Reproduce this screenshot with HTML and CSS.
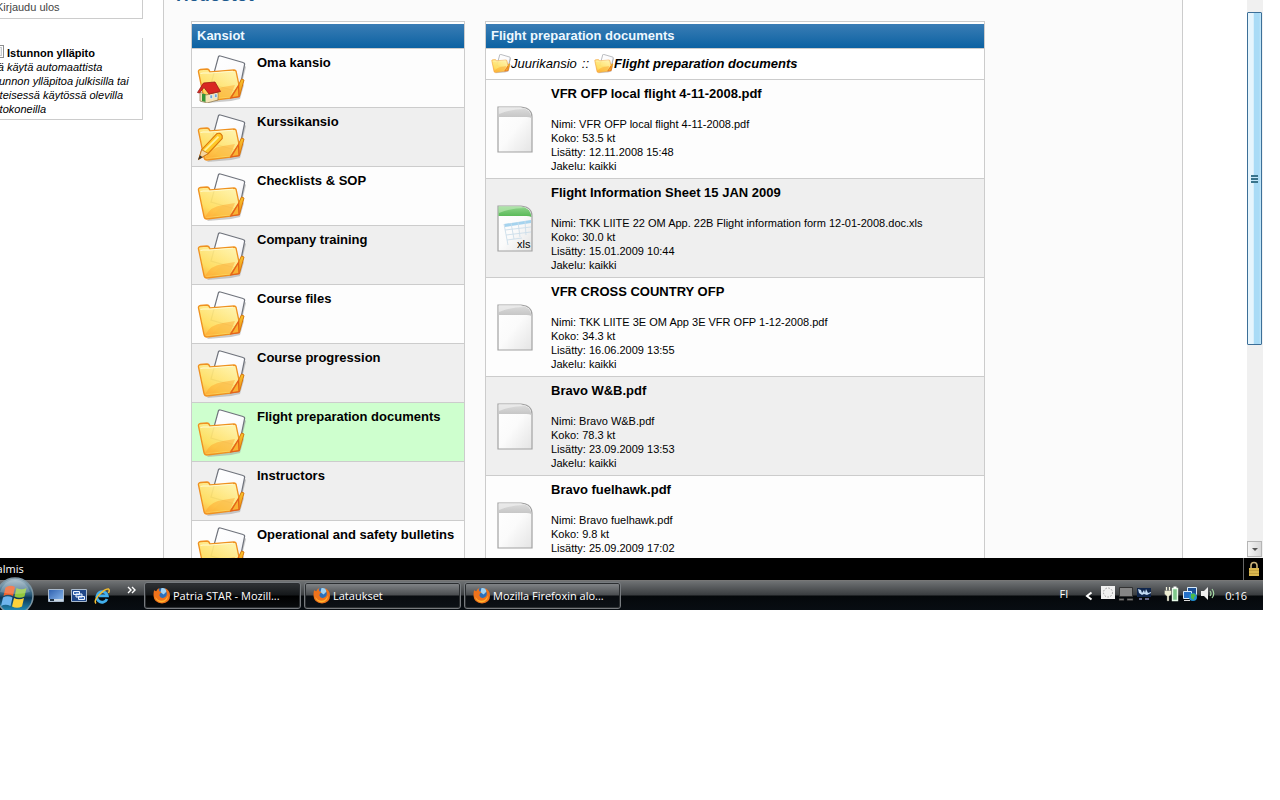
FILE: index.html
```html
<!DOCTYPE html>
<html lang="fi">
<head>
<meta charset="utf-8">
<title>Patria STAR</title>
<link rel="stylesheet" href="styles.css">
</head>
<body>
<svg class="defs" aria-hidden="true">
  <defs>
    <linearGradient id="gFront" x1="0" y1="1" x2="0.7" y2="0"><stop offset="0" stop-color="#ffa52a"/><stop offset=".35" stop-color="#ffdc58"/><stop offset="1" stop-color="#fff2a4"/></linearGradient>
    <linearGradient id="gBack" x1="0" y1="0" x2="0" y2="1"><stop offset="0" stop-color="#f7c52c"/><stop offset="1" stop-color="#f08a18"/></linearGradient>
    <linearGradient id="gPaper" x1="0" y1="0" x2="1" y2="1"><stop offset="0" stop-color="#fff"/><stop offset=".6" stop-color="#fbfbfd"/><stop offset="1" stop-color="#dfe2ea"/></linearGradient>
    <linearGradient id="gDoc" x1="0" y1="0" x2="1" y2="1"><stop offset="0" stop-color="#fff"/><stop offset=".5" stop-color="#fbfbfb"/><stop offset="1" stop-color="#e4e4e4"/></linearGradient>
    <linearGradient id="gGrey" x1="0" y1="0" x2="0" y2="1"><stop offset="0" stop-color="#dcdcdc"/><stop offset="1" stop-color="#c4c4c4"/></linearGradient>
    <linearGradient id="gGreen" x1="0" y1="0" x2="0" y2="1"><stop offset="0" stop-color="#8fd48c"/><stop offset="1" stop-color="#56b854"/></linearGradient>
    <linearGradient id="gOrb" x1="0" y1="0" x2="0" y2="1"><stop offset="0" stop-color="#a9bfcb"/><stop offset=".45" stop-color="#2f5f7e"/><stop offset=".55" stop-color="#0c3553"/><stop offset="1" stop-color="#27a0cf"/></linearGradient>
    <linearGradient id="gScreen" x1="0" y1="0" x2="1" y2="1"><stop offset="0" stop-color="#2d5fae"/><stop offset="1" stop-color="#8fbdf0"/></linearGradient>
    <symbol id="folder" viewBox="0 0 49 50">
      <path d="M47 10l2 2-4 16 2 2-4 14-9 2-24 2" fill="#999" opacity=".5"/>
      <path d="M21.500 1.500q1-1 2-.5L46 7.500q2 .5 1.500 2.500L42 37l-28-8z" fill="url(#gPaper)" stroke="#6f737c" stroke-width="1.200"/>
      <path d="M44.500 24l2.500 1-4.500 16.500L33 43l8-12z" fill="url(#gBack)" stroke="#d9780c"/>
      <path d="M1.500 17q-.5-2 2-2.500L10 14q2 0 3 3l24-2q2 0 2.200 2L42 30l-9 13.200L10 46q-2.500 0-3-2.500z" fill="url(#gFront)" fill-opacity=".93" stroke="#ef9120" stroke-width="1.300"/>
      <path d="M3.500 18.500l2.500-.5h7l23-1.800" stroke="#fffbd0" fill="none"/>
      <path d="M8 44q6-11 18-12l12-2-5 12z" fill="#ff9a20" opacity=".4"/>
      <path d="M41.500 30.500L34 42.800l8-1.200z" fill="#f9b233" stroke="#e4631a" stroke-width="1.300"/>
    </symbol>
    <symbol id="house" viewBox="0 0 24 22">
      <path d="M3 11l6 3 12-3v8l-11 3-7-2z" fill="#f5e3b4" stroke="#87734a" stroke-width=".7"/>
      <path d="M6.500 2L18 1l5.500 9.500L12 13 7 6.500 2.500 12l-2-.5z" fill="#d92722" stroke="#9b1b14" stroke-width=".8"/>
      <path d="M5 13h3.500v8L5 20z" fill="#369537"/>
      <path d="M13 14h2.500v3.500H13zM17.500 13H20v3.500h-2.500z" fill="#6ea8d4" stroke="#fff" stroke-width=".5"/>
    </symbol>
    <symbol id="pencil" viewBox="0 0 30 32">
      <path d="M2 30l3-10L21 3q4-2 6 2v3L12 24z" fill="#ffc928" stroke="#d9760b" stroke-width="1.200"/>
      <path d="M8 21L23 6" stroke="#fff19b" stroke-width="2"/>
      <path d="M5 20l7 4-10 6z" fill="#f5d7a0" stroke="#c57318" stroke-width=".8"/>
      <path d="M3 26l3 2-5 3z" fill="#333"/>
    </symbol>
    <symbol id="doc" viewBox="0 0 36 47">
      <path d="M1 1h23q11 1 11 10v35H1z" fill="url(#gDoc)" stroke="#a2a2a2" stroke-width="1.200"/>
      <path d="M1.500 1.500h22q10 1 11 10.500-2-1-5-1h-28z" fill="url(#gGrey)"/>
      <path d="M2 8Q14 3 28 3l-5-1.500H2z" fill="#f4f4f4" opacity=".6"/>
    </symbol>
    <symbol id="xls" viewBox="0 0 36 47">
      <path d="M1 1h23q11 1 11 10v35H1z" fill="url(#gDoc)" stroke="#a2a2a2" stroke-width="1.200"/>
      <path d="M1.500 1.500h22q10 1 11 10.500-2-1-5-1h-28z" fill="url(#gGreen)"/>
      <path d="M2 8Q14 3 28 3l-5-1.500H2z" fill="#c3ecbd" opacity=".6"/>
      <path d="M7 19l27-4v3L8 22z" fill="#a5d3ee"/>
      <path d="M7 19l4 21M8 25l26-3M9 30l25-3M10 35l15-2M14 18l3 16M21 17l2 15M28 16l1 14" fill="none" stroke="#ccdeea" stroke-width=".9"/>
      <text x="20" y="43" class="ext">xls</text>
    </symbol>
    <symbol id="firefox" viewBox="0 0 16 16">
      <circle cx="8.500" cy="7" r="6" fill="#2d6fb8"/>
      <path d="M8 1q4-.5 5 3l-3 3-3-2z" fill="#9fd3f4"/>
      <path d="M1 3l2 1q1-2 3-3-1 2 0 3l2 1q-2 1-2 3 1 3 4 2 3-1 3-4 0-3-2-5 5 2 5 7 0 7-7.500 7.500Q1 15 .5 8.500.4 5 1 3z" fill="#f0721a"/>
      <path d="M2 9q2 4 6 4t6-5q0 6-6 6.500Q3 14 2 9z" fill="#ffb52b"/>
    </symbol>
  </defs>
</svg>

<div class="screen">
  <div class="browser">
    <div class="page">
      <aside class="sidebar">
        <div class="box account"><a href="#">Kirjaudu ulos</a></div>
        <div class="box session">
          <label class="keep"><input type="checkbox"><span>Istunnon ylläpito</span></label>
          <p>Älä käytä automaattista<br>istunnon ylläpitoa julkisilla tai<br>yhteisessä käytössä olevilla<br>tietokoneilla</p>
        </div>
      </aside>
      <main class="content">
        <h1>Tiedostot</h1>
        <div class="panels">
          <section class="panel folders">
            <h2>Kansiot</h2>
            <ul>
              <li><span class="pic"><svg class="big"><use href="#folder"/></svg><svg class="house"><use href="#house"/></svg></span><a href="#">Oma kansio</a></li>
              <li><span class="pic"><svg class="big"><use href="#folder"/></svg><svg class="pencil"><use href="#pencil"/></svg></span><a href="#">Kurssikansio</a></li>
              <li><span class="pic"><svg class="big"><use href="#folder"/></svg></span><a href="#">Checklists &amp; SOP</a></li>
              <li><span class="pic"><svg class="big"><use href="#folder"/></svg></span><a href="#">Company training</a></li>
              <li><span class="pic"><svg class="big"><use href="#folder"/></svg></span><a href="#">Course files</a></li>
              <li><span class="pic"><svg class="big"><use href="#folder"/></svg></span><a href="#">Course progression</a></li>
              <li class="current"><span class="pic"><svg class="big"><use href="#folder"/></svg></span><a href="#">Flight preparation documents</a></li>
              <li><span class="pic"><svg class="big"><use href="#folder"/></svg></span><a href="#">Instructors</a></li>
              <li><span class="pic"><svg class="big"><use href="#folder"/></svg></span><a href="#">Operational and safety bulletins</a></li>
            </ul>
          </section>
          <section class="panel files">
            <h2>Flight preparation documents</h2>
            <nav class="crumbs"><svg><use href="#folder"/></svg><a href="#">Juurikansio</a><span class="sep">::</span><svg><use href="#folder"/></svg><a href="#" class="here">Flight preparation documents</a></nav>
            <ul>
              <li><svg class="type"><use href="#doc"/></svg><div><h3><a href="#">VFR OFP local flight 4-11-2008.pdf</a></h3><p>Nimi: VFR OFP local flight 4-11-2008.pdf<br>Koko: 53.5 kt<br>Lisätty: 12.11.2008 15:48<br>Jakelu: kaikki</p></div></li>
              <li><svg class="type"><use href="#xls"/></svg><div><h3><a href="#">Flight Information Sheet 15 JAN 2009</a></h3><p>Nimi: TKK LIITE 22 OM App. 22B Flight information form 12-01-2008.doc.xls<br>Koko: 30.0 kt<br>Lisätty: 15.01.2009 10:44<br>Jakelu: kaikki</p></div></li>
              <li><svg class="type"><use href="#doc"/></svg><div><h3><a href="#">VFR CROSS COUNTRY OFP</a></h3><p>Nimi: TKK LIITE 3E OM App 3E VFR OFP 1-12-2008.pdf<br>Koko: 34.3 kt<br>Lisätty: 16.06.2009 13:55<br>Jakelu: kaikki</p></div></li>
              <li><svg class="type"><use href="#doc"/></svg><div><h3><a href="#">Bravo W&amp;B.pdf</a></h3><p>Nimi: Bravo W&amp;B.pdf<br>Koko: 78.3 kt<br>Lisätty: 23.09.2009 13:53<br>Jakelu: kaikki</p></div></li>
              <li><svg class="type"><use href="#doc"/></svg><div><h3><a href="#">Bravo fuelhawk.pdf</a></h3><p>Nimi: Bravo fuelhawk.pdf<br>Koko: 9.8 kt<br>Lisätty: 25.09.2009 17:02</p></div></li>
            </ul>
          </section>
        </div>
      </main>
    </div>
    <div class="scrollbar">
      <div class="thumb"><i></i></div>
      <button class="down" aria-label="Vieritä alas"><svg viewBox="0 0 8 5"><path d="M1 1h6L4 4z" fill="#555"/></svg></button>
    </div>
  </div>

  <div class="status">
    <span>Valmis</span>
    <div class="secure"><svg viewBox="0 0 12 16"><path d="M3 8V4.500a3 3 0 016 0V8" fill="none" stroke="#c9b27a" stroke-width="1.600"/><path d="M1 7h10v8H1z" fill="#d9b64e"/><path d="M1 9.500h10M1 12.500h10" stroke="#c29f40"/></svg></div>
  </div>

  <div class="taskbar">
    <button class="start" aria-label="Käynnistä">
      <svg viewBox="0 0 38 38">
        <circle cx="19" cy="19" r="18" fill="url(#gOrb)" stroke="#7d95a3" stroke-width="1.500"/>
        <path d="M9.500 10.500q4.500-3 9.500-.5l-2 9q-5-2.500-9.500 0z" fill="#f0612a"/>
        <path d="M20.500 11q5 2.500 10 0l-2 8.500q-5 2.500-10 0z" fill="#93c83e"/>
        <path d="M7 20.500q4.500-2.500 9.500 0l-2 8.500q-5-2.500-9.500 0z" fill="#6fb5ee"/>
        <path d="M18 21q5 2.500 10 0l-2 8.500q-5 2.500-10 0z" fill="#fdd23a"/>
        <path d="M4 15Q8 3 19 3t15 12Q19 19 4 15z" fill="#fff" opacity=".2"/>
      </svg>
    </button>
    <div class="quick">
      <button aria-label="Näytä työpöytä"><svg viewBox="0 0 16 14"><path d="M.5 .5h15v12H.5z" fill="url(#gScreen)" stroke="#a9b9cc"/><path d="M1 10h14v2H1z" fill="#c8d6e4"/><path d="M2 10h4v2H2z" fill="#234"/></svg></button>
      <button aria-label="Vaihda ikkunaa"><svg viewBox="0 0 16 14"><path d="M.5 .5h15v12H.5z" fill="#1f4688" stroke="#a9b9cc"/><path d="M2.500 2.500h6v3h-6zM5 5h6v3H5zM7.500 7.500h6v3h-6z" fill="#3f6fb8" stroke="#eef4ff"/></svg></button>
      <button aria-label="Internet Explorer"><svg viewBox="0 0 16 16"><path d="M13 11a5.300 5.300 0 11.300-3.200H5" fill="none" stroke="#42b0ee" stroke-width="2.800"/><path d="M2 15.500Q-.5 13 5 7q6-6.500 9.500-6 1.500 1 0 4" fill="none" stroke="#f3bd31" stroke-width="1.500"/></svg></button>
    </div>
    <button class="more" aria-label="Lisää"><svg viewBox="0 0 9 8"><path d="M1 1l3 3-3 3M5 1l3 3-3 3" fill="none" stroke="#fff" stroke-width="1.400"/></svg></button>
    <div class="tasks">
      <button class="active"><svg><use href="#firefox"/></svg><span>Patria STAR - Mozill...</span></button>
      <button><svg><use href="#firefox"/></svg><span>Lataukset</span></button>
      <button><svg><use href="#firefox"/></svg><span>Mozilla Firefoxin alo...</span></button>
    </div>
    <div class="tray">
      <span class="lang">FI</span>
      <svg class="chev" viewBox="0 0 8 10"><path d="M6.500 1.500L2 5l4.500 3.500" fill="none" stroke="#fff" stroke-width="2"/></svg>
      <div class="icons">
        <svg viewBox="0 0 16 16"><path d="M1 0h14v13H1z" fill="#f1f1f1"/><circle cx="8" cy="6.500" r="4.500" fill="none" stroke="#999" stroke-dasharray="1.500 1.500"/></svg>
        <svg viewBox="0 0 16 16"><path d="M1.500 1.500h13v9h-13z" fill="#858585" stroke="#333"/><path d="M1 12.500h5v2H1zM9 12.500h6v2H9z" fill="#777" stroke="#222" stroke-width=".5"/></svg>
        <svg viewBox="0 0 16 16"><path d="M1 2h14v9H1z" fill="#10264c"/><path d="M2 3l3 1 1 3 2-3 1 3 1-4 2 4 3-1v1l-4 2-3-1-2 1-3-2z" fill="#c5dcf5"/><path d="M3 12h3v2H3zM9 12h4v2H9z" fill="#668"/></svg>
      </div>
      <div class="icons">
        <svg viewBox="0 0 16 16"><path d="M8.500 2.500h5v12h-5z" fill="#7fc98b" stroke="#e8fbe8" stroke-width="1.400"/><path d="M9.500 .5h3v2h-3z" fill="#fff"/><path d="M2.500 1v4M5.500 1v4" stroke="#f3f3df" stroke-width="1.300"/><path d="M.5 4.500h7V8L5.500 10H5v5H3v-5h-.5l-2-2z" fill="#ededd2" stroke="#555" stroke-width=".4"/></svg>
        <svg viewBox="0 0 16 16"><path d="M5.500 1.500h9v7h-9z" fill="#1b4f95" stroke="#d9ebfa"/><path d="M1.500 5.500h8v7h-8z" fill="#2470c8" stroke="#d9ebfa"/><path d="M2 14.500h6" stroke="#ddd"/><circle cx="11" cy="11" r="4" fill="#238ed0"/><path d="M9 8l3-.5 2 2.500-2 1v3l-3-2z" fill="#4dbb45"/></svg>
        <svg viewBox="0 0 16 16"><path d="M1 5h3l4-4v13l-4-4H1z" fill="#eee"/><path d="M10 5q2 2.500 0 5M12 3q3.500 4.500 0 9" fill="none" stroke="#a5d9a4" stroke-width="1.200"/></svg>
      </div>
      <time>0:16</time>
    </div>
  </div>
</div>
</body>
</html>
```
FILE: styles.css
```css
* { box-sizing: border-box; }
body {
  margin: 0;
  background: #fff;
  color: #000;
  font-family: "Liberation Sans", Arial, sans-serif;
  font-size: 11px;
  line-height: 14px;
}
h1, h2, h3, p, ul { margin: 0; padding: 0; }
ul { list-style: none; }
a { color: inherit; text-decoration: none; }
button { border: 0; padding: 0; background: none; color: inherit; font: inherit; }
svg { display: block; flex: none; }
.defs { position: absolute; width: 0; height: 0; }

.screen {
  display: flex;
  flex-direction: column;
  height: calc(100vh - 190px);
  margin-right: 17px;
  overflow: hidden;
}
.browser { display: flex; flex: 1; min-height: 0; overflow: hidden; }
.page { display: flex; flex: 1; gap: 20px; min-width: 0; padding-right: 64px; }

/* Sidebar */
.sidebar { flex: none; width: 143px; overflow: hidden; white-space: nowrap; }
.box { border: 1px solid #ccc; border-left: 0; }
.account { height: 19px; border-top: 0; color: #444; }
.account a { display: block; margin-left: -4px; }
.session { margin-top: 19px; padding: 8px 0 3px; border-top: 0; }
.keep { display: flex; align-items: center; gap: 3px; margin-left: -9px; font-weight: bold; }
.keep input {
  appearance: none;
  width: 13px;
  height: 13px;
  margin: -4px 0 0;
  border: 1px solid #8e8f8f;
  background: #f0f0f0;
  box-shadow: inset 0 0 0 1px #fff, inset 0 0 0 2px #c8ccd0;
}
.session p { margin-left: -12px; font-style: italic; }

/* Main column */
.content {
  flex: 1;
  min-width: 0;
  padding: 0 27px;
  border: solid #ccc;
  border-width: 0 1px;
  background: #fbfbfb;
}
h1 {
  margin: -15px 0 0 -18px;
  padding-bottom: 16px;
  color: #1d5a8e;
  font-size: 18px;
  line-height: 20px;
}
.panels { display: flex; align-items: flex-start; gap: 20px; }
.panel { border: 1px solid #ccc; padding-top: 2px; background: #fff; }
.folders { width: 274px; }
.files { width: 500px; }
h2 {
  padding: 0 5px;
  background: linear-gradient(#3a7db5, #0c62a2);
  color: #eef8ff;
  font-size: 13px;
  line-height: 24px;
}
.panel li { display: flex; border-top: 1px solid #ccc; background: #fdfdfd; }
.panel li:nth-child(even) { background: #efefef; }
.folders li { gap: 11px; height: 59px; padding: 6px 0 0 5px; font-size: 13px; line-height: 16px; font-weight: bold; }
.folders li a { white-space: nowrap; }
.panel li.current { background: #ceffce; }
.pic { position: relative; flex: none; }
.big { width: 49px; height: 50px; }
.house, .pencil { position: absolute; left: 0; bottom: 4px; }
.house { width: 24px; height: 22px; }
.pencil { width: 28px; height: 32px; }
.crumbs {
  display: flex;
  align-items: center;
  height: 31px;
  padding: 0 5px;
  border-top: 1px solid #ccc;
  font-size: 13px;
  font-style: italic;
}
.crumbs svg { width: 20px; height: 20px; }
.sep { margin: 0 5px; }
.here { font-weight: bold; }
.files li { gap: 18px; height: 99px; padding: 6px 11px; }
.type { align-self: center; width: 36px; height: 47px; }
.ext { font-size: 11px; }
h3 { margin-bottom: 15px; font-size: 13px; line-height: 16px; }
.files p { white-space: nowrap; }

/* Scroll bar */
.scrollbar {
  display: flex;
  flex: none;
  flex-direction: column;
  justify-content: space-between;
  width: 16px;
  padding-top: 12px;
  background: #f0f0f0;
}
.thumb {
  display: flex;
  align-items: center;
  justify-content: center;
  width: 15px;
  height: 61%;
  border: 1px solid #3c6f98;
  border-radius: 1px;
  background: linear-gradient(90deg, #e6f5fd 40%, #a9dbf6 50%, #a9dbf6 85%, #c5e8fa);
}
.thumb i { width: 7px; height: 8px; background: repeating-linear-gradient(#39748c 0 2px, #c5e8fa 2px 3px); }
.down { display: flex; align-items: center; justify-content: center; width: 15px; height: 16px; margin-bottom: 1px; border: 1px solid #b5b5b5; background: linear-gradient(90deg, #f4f4f4, #d8d8d8); }
.down svg { width: 8px; height: 5px; }

/* Status bar and taskbar */
.status, .taskbar { flex: none; background: #000; color: #fff; font-family: "Open Sans", "Noto Sans", sans-serif; }
.status { display: flex; justify-content: space-between; height: 22px; line-height: 22px; }
.status span { margin-left: -10px; }
.secure { display: flex; align-items: center; justify-content: center; width: 20px; border-left: 1px solid #666; }
.secure svg { width: 12px; height: 16px; }
.taskbar {
  display: flex;
  align-items: center;
  height: 30px;
  border-top: 1px solid #777;
  background: linear-gradient(#6f7274, #3a3d40 48%, #05080b 52%, #080d12);
}
.start { flex: none; width: 34px; height: 30px; }
.start svg { width: 38px; height: 38px; margin: -4px 0 0 -4px; }
.quick { display: flex; gap: 7px; align-items: center; margin-left: 14px; }
.quick svg { width: 16px; height: 16px; }
.more { align-self: flex-start; margin: 5px 0 0 17px; }
.more svg { width: 9px; height: 8px; }
.tasks { display: flex; gap: 3px; margin-left: 8px; }
.tasks button {
  display: flex;
  align-items: center;
  gap: 3px;
  width: 157px;
  height: 27px;
  padding: 0 8px;
  border: 1px solid #777b7f;
  border-radius: 3px;
  background: linear-gradient(#85888b, #4b4e51 48%, #090c10 52%, #0c1116);
  box-shadow: inset 0 0 0 1px #2b2e31;
  white-space: nowrap;
}
.tasks button.active { background: linear-gradient(#303336, #15181a 48%, #000 52%, #090c0e); }
.tasks svg { width: 17px; height: 17px; }
.tray { display: flex; align-items: center; margin: -3px 16px 0 auto; }
.lang { margin-right: 17px; }
.chev { width: 8px; height: 10px; margin: 4px 7px 0 0; }
.icons { display: flex; gap: 2px; margin-right: 12px; }
.icons + .icons { margin-right: 9px; }
.icons svg { width: 16px; height: 16px; }
.tray time { padding-top: 3px; }
```
